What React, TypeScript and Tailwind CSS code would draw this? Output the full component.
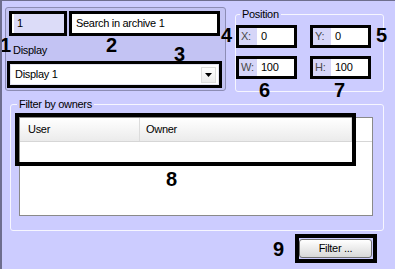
import React from 'react';

// annotation frame drawn round a control
function Frame({ className = '', children }: { className?: string; children: React.ReactNode }) {
    return <div className={`border-[3px] border-black ${className}`}>{children}</div>;
}

function Num({ n, className }: { n: string; className: string }) {
    return <span className={`absolute text-[20px] leading-[20px] font-bold tracking-normal text-black ${className}`}>{n}</span>;
}

function PosField({ label, value }: { label: string; value: string }) {
    return (
        <Frame className="h-[23px] flex">
            <div className="w-[18px] h-full bg-[#d6d6f8] text-[#4a4a4a] pl-[2px] flex items-center">{label}</div>
            <div className="flex-1 h-full bg-white pl-[4px] flex items-center">{value}</div>
        </Frame>
    );
}

export default function App() {
    return (
        <div className="relative w-[395px] h-[269px] overflow-hidden bg-[#ccccff] border-l-2 border-t border-[#6e6e8e] font-['Liberation_Sans',Arial,sans-serif] text-[11px] tracking-[-0.3px] text-black">
            <div className="flex items-start h-[97px]">
                {/* object settings panel */}
                <div className="ml-[3px] mt-[6px] w-[221px] h-[84px] rounded-[3px] border border-[#8c8cb4] bg-[#c3c3f3] pl-[3px] pt-[3px]">
                    <div className="flex gap-[2px]">
                        <Frame className="w-[58px] h-[25px]">
                            <div className="h-full bg-[#dcdcf8] border-l-2 border-white flex items-center pl-[3px]">1</div>
                        </Frame>
                        <Frame className="w-[151px] h-[25px]">
                            <div className="h-full bg-white flex items-center pl-[4px]">Search in archive 1</div>
                        </Frame>
                    </div>
                    <div className="mt-[8px] ml-[4px] leading-[13px]">Display</div>
                    <Frame className="mt-[4px] -ml-[2px] w-[215px] h-[27px]">
                        <div className="h-full bg-white border border-[#e4e4f2] flex items-center justify-between pl-[4px] pr-[2px]">
                            <span>Display 1</span>
                            <div className="w-[15px] h-[16px] bg-linear-to-b from-white to-[#ececec] border border-[#dedede] flex items-center justify-center">
                                <svg width="7" height="4" viewBox="0 0 7 4"><path d="M0 0h7L3.5 4z" fill="#000" /></svg>
                            </div>
                        </div>
                    </Frame>
                </div>

                {/* position group */}
                <fieldset className="ml-[9px] mt-[7px] w-[149px] h-[84px] rounded-[3px] border border-[#f6f6ff]">
                    <legend className="ml-[4px] px-[2px] leading-[13px]">Position</legend>
                    <div className="mt-[4px] grid grid-cols-[61px_61px] gap-x-[13px] gap-y-[8px]">
                        <PosField label="X:" value="0" />
                        <PosField label="Y:" value="0" />
                        <PosField label="W:" value="100" />
                        <PosField label="H:" value="100" />
                    </div>
                </fieldset>
            </div>

            {/* filter by owners group */}
            <fieldset className="ml-[8px] w-[374px] h-[133px] rounded-[3px] border border-[#f6f6ff]">
                <legend className="ml-[6px] px-[2px] leading-[13px]">Filter by owners</legend>
                <div className="mt-[6px] ml-[8px] w-[354px] h-[99px] border border-[#8a8a8a] bg-white">
                    <div className="flex h-[24px] border-b border-[#d6d6d6]">
                        <div className="w-[120px] flex items-center pl-[8px] border-r border-[#dcdcdc] bg-linear-to-b from-white to-[#ebebeb]">User</div>
                        <div className="w-[212px] flex items-center pl-[6px] border-r border-[#dcdcdc] bg-linear-to-b from-white to-[#ebebeb]">Owner</div>
                        <div className="flex-1 bg-white" />
                    </div>
                </div>
            </fieldset>

            <div className="mt-[3px] pr-[18px] flex items-center justify-end gap-[11px]">
                <span className="text-[20px] leading-[20px] font-bold tracking-normal">9</span>
                <div className="w-[82px] h-[29px] border-4 border-black flex items-center">
                    <button className="w-[73px] h-[19px] rounded-[3px] border border-[#707070] bg-linear-to-b from-white to-[#d8d8d8] text-center leading-[17px]">
                        Filter ...
                    </button>
                </div>
            </div>

            {/* callout marks */}
            <div className="absolute left-[13px] top-[112px] w-[341px] h-[53px] border-4 border-black" />
            <Num n="1" className="left-[-2px] top-[34px]" />
            <Num n="2" className="left-[104px] top-[34px]" />
            <Num n="3" className="left-[172px] top-[43px]" />
            <Num n="4" className="left-[219px] top-[24px]" />
            <Num n="5" className="left-[374px] top-[24px]" />
            <Num n="6" className="left-[257px] top-[79px]" />
            <Num n="7" className="left-[332px] top-[79px]" />
            <Num n="8" className="left-[164px] top-[168px]" />
        </div>
    );
}
